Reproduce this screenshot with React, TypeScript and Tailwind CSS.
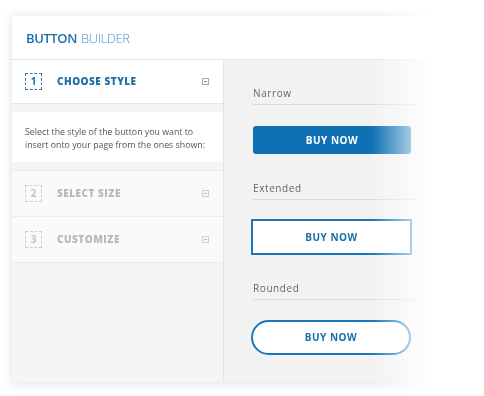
export default function App() {
  const steps = [
    { n: "2", label: "Select Size" },
    { n: "3", label: "Customize" },
  ];

  return (
    <div className="w-[484px] h-[396px] bg-white overflow-hidden font-['Open_Sans',sans-serif]">
      {/* fade-out on the right side of the whole card */}
      <div className="h-full pt-4 pl-3 [mask-image:linear-gradient(to_right,black_372px,transparent_434px)] [-webkit-mask-image:linear-gradient(to_right,black_372px,transparent_434px)]">
        <div className="w-[470px] h-[366px] bg-white shadow-[0_1px_10px_rgba(0,0,0,0.13)] flex flex-col">
          {/* header */}
          <div className="h-[44px] shrink-0 border-b border-[#e6e6e6] pl-[14px] pt-[1px] flex items-center text-[13px] leading-none tracking-[-0.4px]">
            <span className="font-semibold text-[#1d6ea9]">BUTTON</span>
            <span className="ml-[4px] font-light text-[#4f94cc]">BUILDER</span>
          </div>

          <div className="flex flex-1">
            {/* left column */}
            <div className="w-[212px] shrink-0 bg-[#f5f5f5] border-r border-[#e4e4e4] flex flex-col">
              <div className="h-[44px] bg-white border-b border-[#e8e8e8] flex items-center pl-[13px] pr-[14px]">
                <div className="w-[17px] h-[17px] border border-dashed border-[#2a7bbf] flex items-center justify-center text-[10px] font-bold text-[#1d6ea9]">
                  1
                </div>
                <span className="ml-[15px] text-[10px] font-extrabold tracking-[0.5px] text-[#1d6ea9] uppercase">
                  Choose Style
                </span>
                <div className="ml-auto w-[7px] h-[7px] border border-[#a8a8a8] flex items-center justify-center">
                  <div className="w-[3px] h-px bg-[#888]" />
                </div>
              </div>

              <div className="mt-[8px] h-[50px] bg-white pl-[13px] pt-[14px] text-[8.8px] leading-[13px] text-[#555]">
                <p>
                  Select the style of the button you want to
                  <br />
                  insert onto your page from the ones shown:
                </p>
              </div>

              <div className="mt-[8px] border-t border-[#ececec]">
                {steps.map((s) => (
                  <div
                    key={s.n}
                    className="h-[46px] bg-[#fafafa] border-b border-[#ececec] flex items-center pl-[13px] pr-[14px]"
                  >
                    <div className="w-[17px] h-[17px] border border-dashed border-[#cfcfcf] flex items-center justify-center text-[10px] font-bold text-[#c4c4c4]">
                      {s.n}
                    </div>
                    <span className="ml-[15px] text-[10px] font-extrabold tracking-[0.5px] text-[#b8b8b8] uppercase">
                      {s.label}
                    </span>
                    <div className="ml-auto w-[7px] h-[7px] border border-[#cfcfcf] flex items-center justify-center">
                      <div className="w-[3px] h-px bg-[#bbb]" />
                    </div>
                  </div>
                ))}
              </div>
            </div>

            {/* right preview panel */}
            <div className="flex-1 bg-[#f2f2f2] pl-[29px] pt-[26px]">
              <div className="text-[10px] leading-[14px] tracking-[0.6px] text-[#666]">Narrow</div>
              <div className="mt-[4px] h-px bg-[#dcdcdc]" />
              <div className="mt-[21px] w-[158px] h-[28px] rounded-[3px] bg-[#0f71b4] flex items-center justify-center text-[10px] font-bold tracking-[0.5px] text-white">
                BUY NOW
              </div>

              <div className="mt-[27px] text-[10px] leading-[14px] tracking-[0.6px] text-[#666]">Extended</div>
              <div className="mt-[4px] h-px bg-[#dcdcdc]" />
              <div className="mt-[19px] -ml-[2px] w-[161px] h-[36px] border-2 border-[#1a77bc] bg-white flex items-center justify-center text-[10px] font-bold tracking-[0.5px] text-[#1a6eab]">
                BUY NOW
              </div>

              <div className="mt-[26px] text-[10px] leading-[14px] tracking-[0.6px] text-[#666]">Rounded</div>
              <div className="mt-[4px] h-px bg-[#dcdcdc]" />
              <div className="mt-[20px] -ml-[2px] w-[160px] h-[35px] rounded-full border-2 border-[#1a77bc] bg-white flex items-center justify-center text-[10px] font-bold tracking-[0.5px] text-[#1a6eab]">
                BUY NOW
              </div>
            </div>
          </div>
        </div>
      </div>
    </div>
  );
}
